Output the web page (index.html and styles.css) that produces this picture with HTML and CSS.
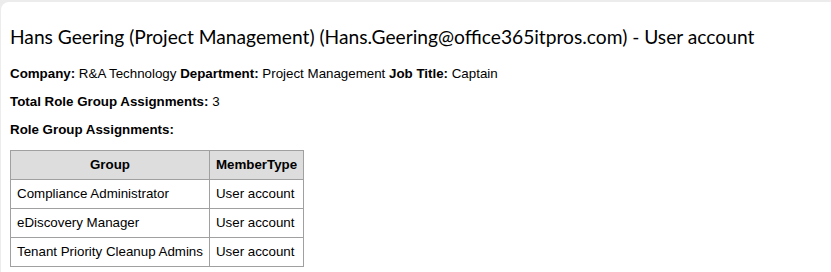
FILE: index.html
```html
<!DOCTYPE html>
<html lang="en">
<head>
  <meta charset="UTF-8" />
  <title>User account</title>
  <link rel="stylesheet" href="styles.css">
</head>
<body>

  <!-- Report panel -->
  <div class="report">
    <h1 class="report-title">Hans Geering (Project Management) (Hans.Geering@office365itpros.com) - User account</h1>

    <p><b>Company:</b> R&amp;A Technology <b>Department:</b> Project Management <b>Job Title:</b> Captain</p>
    <p><b>Total Role Group Assignments:</b> 3</p>
    <p><b>Role Group Assignments:</b></p>

    <table class="groups">
      <thead>
        <tr>
          <th>Group</th>
          <th>MemberType</th>
        </tr>
      </thead>
      <tbody>
        <tr>
          <td>Compliance Administrator</td>
          <td>User account</td>
        </tr>
        <tr>
          <td>eDiscovery Manager</td>
          <td>User account</td>
        </tr>
        <tr>
          <td>Tenant Priority Cleanup Admins</td>
          <td>User account</td>
        </tr>
      </tbody>
    </table>
  </div>

</body>
</html>
```

FILE: styles.css
```css
* {
  margin: 0;
  padding: 0;
  box-sizing: border-box;
}

body {
  background: #ececec;
  height: 100vh;
  overflow: hidden;
  padding: 2px 0 0 1px;
}

/* White panel with rounded corner */
.report {
  background: #fff;
  height: 100%;
  border-top-left-radius: 8px;
  padding: 22px 10px 0 9px;
  font-family: "Liberation Sans", Arial, sans-serif;
  font-size: 13.33px;
  color: #000;
}

.report-title {
  font-family: Lato, "Noto Sans", sans-serif;
  font-weight: normal;
  font-size: 19.2px;
  line-height: 26px;
  margin-bottom: 16px;
}

.report p {
  line-height: 15px;
  margin-bottom: 13px;
}

/* Role group table */
.groups {
  border-collapse: collapse;
  margin-top: 7px;
}

.groups th,
.groups td {
  border: 1px solid #a0a0a0;
  padding: 6px 6px;
  line-height: 16px;
  text-align: left;
}

.groups th {
  background: #dddddd;
  text-align: center;
}
```
